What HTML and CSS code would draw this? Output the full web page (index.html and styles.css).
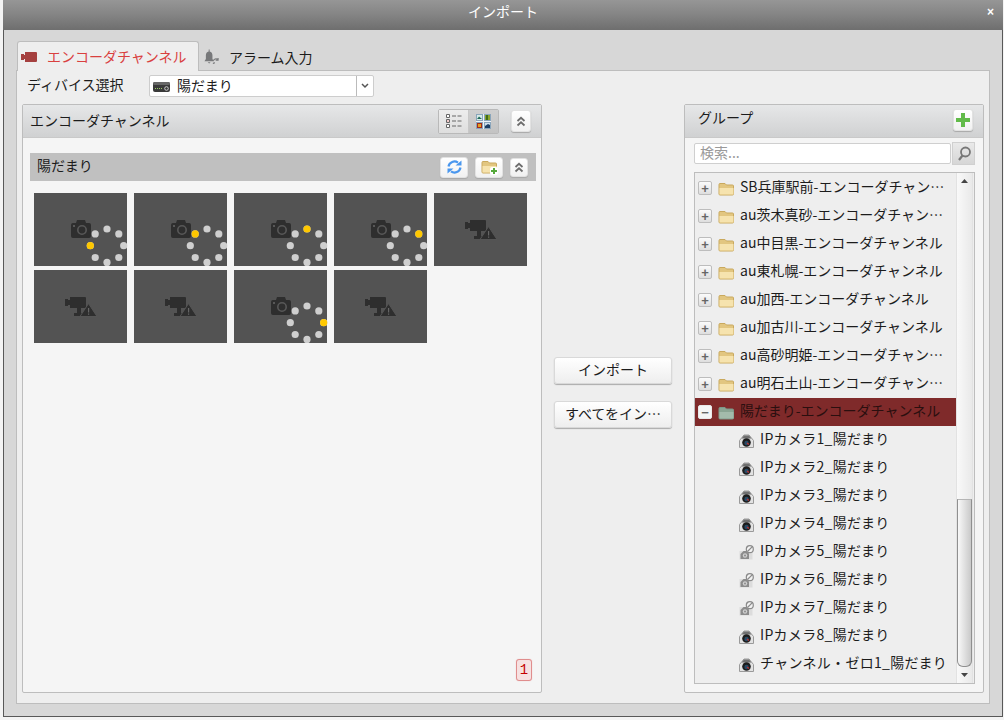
FILE: index.html
```html
<!DOCTYPE html>
<html lang="ja">
<head>
  <meta charset="UTF-8" />
  <title>インポート</title>
  <link rel="stylesheet" href="styles.css">
</head>
<body>

  <!-- shared icons -->
  <svg class="defs">
    <defs>
      <g id="cam">
        <path d="M5 3l1-3h8l1 3h3a2 2 0 0 1 2 2v11a2 2 0 0 1-2 2H2a2 2 0 0 1-2-2V5a2 2 0 0 1 2-2z" fill="#2e2e2e"/>
        <circle cx="11" cy="10" r="4.2" fill="none" stroke="#585858" stroke-width="1.6"/>
        <rect x="2" y="5" width="2" height="2" fill="#585858"/>
      </g>
      <g id="warncam">
        <path d="M0 2h3v1h2V0h15a1 1 0 0 1 1 1v10H16v5h5v3H9v-3h3v-5H5V8H3v1H0z" fill="#2e2e2e"/>
        <path d="M23.500 6.500L32 19.500H15z" fill="#2e2e2e" stroke="#555" stroke-width="1"/>
        <path d="M23 11h1.200v4.500H23zM23 16.500h1.200v1.300H23z" fill="#666"/>
      </g>
      <g id="dots" fill="#cfcfcf">
        <circle cx="73" cy="36" r="3.600"/>
        <circle cx="84.800" cy="40.900" r="3.600"/>
        <circle cx="89.700" cy="52.700" r="3.600"/>
        <circle cx="84.800" cy="64.500" r="3.600"/>
        <circle cx="73" cy="69.400" r="3.600"/>
        <circle cx="61.200" cy="64.500" r="3.600"/>
        <circle cx="56.300" cy="52.700" r="3.600"/>
        <circle cx="61.200" cy="40.900" r="3.600"/>
      </g>
      <g id="folder">
        <path d="M1 3.500a1 1 0 0 1 1-1h5l1.500 1.500h6a1 1 0 0 1 1 1v8a1 1 0 0 1-1 1H2a1 1 0 0 1-1-1z" fill="#e2c680" stroke="#c9a95e"/>
        <path d="M1.500 7h14v6.500h-14z" fill="#f6e3ae"/>
      </g>
      <g id="folder-sel">
        <path d="M1 3.500a1 1 0 0 1 1-1h5l1.500 1.500h6a1 1 0 0 1 1 1v8a1 1 0 0 1-1 1H2a1 1 0 0 1-1-1z" fill="#8aa593" stroke="#7d9788"/>
        <path d="M1.500 7h14v6.500h-14z" fill="#a3bbab"/>
      </g>
      <g id="ipcam">
        <path d="M.5 14.500V7.500L5 2h5l4.500 5.500v7z" fill="#e2e2e2" stroke="#9a9a9a"/>
        <path d="M5 2.500h5l2.500 3h-10z" fill="#6f6f6f"/>
        <circle cx="7.500" cy="9.500" r="4.300" fill="#1d1d1d"/>
        <circle cx="7.500" cy="10" r="2.200" fill="#274a66"/>
        <path d="M8 10l2 1.500" stroke="#c03030" stroke-width="1.200"/>
      </g>
      <g id="ipoff">
        <rect x=".5" y="6" width="13" height="8.500" fill="#dcdcdc"/>
        <path d="M1.500 14V9l3-3h3.500l2 2.500V14z" fill="#8c8c8c"/>
        <circle cx="6" cy="10.500" r="2.200" fill="#d0d0d0"/>
        <circle cx="6" cy="10.500" r="1" fill="#8c8c8c"/>
        <circle cx="10.800" cy="4.200" r="3.500" fill="#f2f2f2" stroke="#8a8a8a" stroke-width="1.200"/>
        <path d="M8.500 6.500l4.600-4.600" stroke="#8a8a8a" stroke-width="1.200"/>
      </g>
      <path id="chev" d="M2.500 6L6 2.800 9.500 6M2.500 10.500L6 7.300l3.500 3.200" fill="none" stroke="#6d6d6d" stroke-width="1.800"/>
    </defs>
  </svg>

  <div class="dialog">
    <div class="titlebar">
      <span class="title">インポート</span>
      <span class="close">×</span>
    </div>

    <div class="dialog-body">
      <div class="tabs">
        <div class="tab tab-active">
          <svg class="tab-icon" width="16" height="10" viewBox="0 0 16 10"><path d="M0 2h3v1h1V0h11a1 1 0 0 1 1 1v8a1 1 0 0 1-1 1H4V7H3v1H0z" fill="#a5403f"/></svg>
          <span class="tab-text">エンコーダチャンネル</span>
        </div>
        <div class="tab">
          <svg class="tab-icon" width="15" height="16" viewBox="0 0 16 16"><path d="M5 0h1v2c2 .5 3 2 3 4v4l1.500 2.500H.5L2 10V6c0-2 1-3.500 3-4z" fill="#77787a"/><path d="M4 13.500h3l-1.500 1.500z" fill="#77787a"/><path d="M10 12a3 3 0 0 1 4.500-1.500M15 9v2.500h-2.500M9.500 15l2-1" fill="none" stroke="#77787a" stroke-width="1.200"/></svg>
          <span class="tab-text">アラーム入力</span>
        </div>
      </div>

      <div class="tab-panel">
        <div class="device-row">
          <span class="device-label">ディバイス選択</span>
          <div class="select">
            <svg class="select-icon" width="17" height="11" viewBox="0 0 17 11"><rect y="1" width="17" height="10" rx="2" fill="#3a3a3a"/><rect y="1" width="17" height="3" rx="1.500" fill="#666"/><path d="M2 7h1v1H2zM4 7h1v1H4zM6 7h1v1H6zM8 7h1v1H8z" fill="#9c6"/><circle cx="13.500" cy="7.500" r="1.800" fill="none" stroke="#ccc"/></svg>
            <span class="select-text">陽だまり</span>
            <span class="select-arrow">
              <svg width="8" height="6" viewBox="0 0 8 6"><path d="M1 1l3 3 3-3" fill="none" stroke="#555" stroke-width="1.500"/></svg>
            </span>
          </div>
        </div>

        <div class="main">
          <!-- left panel -->
          <section class="panel panel-left">
            <div class="panel-head">
              <span class="panel-title">エンコーダチャンネル</span>
              <div class="toggle">
                <span class="toggle-item">
                  <svg width="16" height="14" viewBox="0 0 16 14"><path d="M.5.500h3v3h-3zM.5 5.500h3v3h-3zM.5 10.500h3v3h-3z" fill="#fff" stroke="#666"/><rect x="1.500" y="6.500" width="1" height="1" fill="#c33"/><path d="M6 2h4M11.500 2h4M6 7h4M11.500 7h4M6 12h4M11.500 12h4" stroke="#666"/></svg>
                </span>
                <span class="toggle-item toggle-on">
                  <svg width="15" height="15" viewBox="0 0 15 15"><path d="M0 0h15v15H0z" fill="#eef3f8"/><rect x=".5" y=".5" width="6" height="6" fill="#d8ebe6" stroke="#8aa5bb"/><path d="M1 5l2-2.500L6 5z" fill="#1f6a5a"/><rect x="8.500" y=".5" width="6" height="6" fill="#8aa52a" stroke="#8aa5bb"/><path d="M10 1h2v5h-2z" fill="#3f6a1a"/><rect x=".5" y="8.500" width="6" height="6" fill="#a52a1a" stroke="#8aa5bb"/><path d="M2 10h3v3H2z" fill="#e0a020"/><rect x="8.500" y="8.500" width="6" height="6" fill="#cfe0ee" stroke="#8aa5bb"/><path d="M9 14v-2l3-2 2 1v3z" fill="#1d3f66"/></svg>
                </span>
              </div>
              <button class="btn-icon btn-collapse"><svg width="12" height="13" viewBox="0 0 12 13"><use href="#chev"/></svg></button>
            </div>

            <div class="panel-left-body">
              <div class="subhead">
                <span class="subhead-title">陽だまり</span>
                <button class="btn-icon btn-wide">
                  <svg width="17" height="16" viewBox="0 0 17 16"><path d="M2.500 7.500A6 6 0 0 1 12 3.700" fill="none" stroke="#4a97ee" stroke-width="2.200"/><path d="M14.500 8.500A6 6 0 0 1 5 12.300" fill="none" stroke="#4a97ee" stroke-width="2.200"/><path d="M9.500 6.500h6v-5zM7.500 9.500h-6v5z" fill="#4a97ee"/></svg>
                </button>
                <button class="btn-icon btn-wide">
                  <svg width="17" height="16" viewBox="0 0 17 16"><use href="#folder"/><rect x="9" y="8" width="8" height="8" rx="2" fill="#fff"/><path d="M12 9h2v2h2v2h-2v2h-2v-2h-2v-2h2z" fill="#56a93c"/></svg>
                </button>
                <button class="btn-icon btn-collapse-small"><svg width="12" height="13" viewBox="0 0 12 13"><use href="#chev"/></svg></button>
              </div>

              <div class="thumbs">
                <svg class="thumb" viewBox="0 0 93 73"><use href="#cam" x="37" y="27"/><use href="#dots"/><circle cx="56.300" cy="52.700" r="3.600" fill="#ffc800"/></svg>
                <svg class="thumb" viewBox="0 0 93 73"><use href="#cam" x="37" y="27"/><use href="#dots"/><circle cx="61.200" cy="40.900" r="3.600" fill="#ffc800"/></svg>
                <svg class="thumb" viewBox="0 0 93 73"><use href="#cam" x="37" y="27"/><use href="#dots"/><circle cx="73" cy="36" r="3.600" fill="#ffc800"/></svg>
                <svg class="thumb" viewBox="0 0 93 73"><use href="#cam" x="37" y="27"/><use href="#dots"/><circle cx="84.800" cy="40.900" r="3.600" fill="#ffc800"/></svg>
                <svg class="thumb" viewBox="0 0 93 73"><use href="#warncam" x="31" y="27"/></svg>
                <svg class="thumb" viewBox="0 0 93 73"><use href="#warncam" x="31" y="27"/></svg>
                <svg class="thumb" viewBox="0 0 93 73"><use href="#warncam" x="31" y="27"/></svg>
                <svg class="thumb" viewBox="0 0 93 73"><use href="#cam" x="37" y="27"/><use href="#dots"/><circle cx="89.700" cy="52.700" r="3.600" fill="#ffc800"/></svg>
                <svg class="thumb" viewBox="0 0 93 73"><use href="#warncam" x="31" y="27"/></svg>
              </div>

              <span class="page-badge">1</span>
            </div>
          </section>

          <!-- import buttons -->
          <div class="actions">
            <button class="btn">インポート</button>
            <button class="btn">すべてをイン…</button>
          </div>

          <!-- right panel -->
          <section class="panel panel-right">
            <div class="panel-head">
              <span class="panel-title group-title">グループ</span>
              <button class="btn-icon btn-add">
                <svg width="14" height="14" viewBox="0 0 14 14"><path d="M5 0h4v5h5v4H9v5H5V9H0V5h5z" fill="#62bb4a"/></svg>
              </button>
            </div>

            <div class="panel-right-body">
              <div class="search-row">
                <input class="search-input" placeholder="検索..." />
                <span class="search-btn">
                  <svg width="16" height="16" viewBox="0 0 16 16"><circle cx="9.500" cy="6" r="4.500" fill="none" stroke="#777" stroke-width="1.800"/><path d="M6.500 9.500L3 14" stroke="#777" stroke-width="2.200"/></svg>
                </span>
              </div>

              <div class="tree">
                <div class="tree-rows">
                  <div class="row"><span class="exp">+</span><svg class="folder" viewBox="0 0 17 15"><use href="#folder"/></svg><span class="row-text">SB兵庫駅前-エンコーダチャン…</span></div>
                  <div class="row"><span class="exp">+</span><svg class="folder" viewBox="0 0 17 15"><use href="#folder"/></svg><span class="row-text">au茨木真砂-エンコーダチャン…</span></div>
                  <div class="row"><span class="exp">+</span><svg class="folder" viewBox="0 0 17 15"><use href="#folder"/></svg><span class="row-text">au中目黒-エンコーダチャンネル</span></div>
                  <div class="row"><span class="exp">+</span><svg class="folder" viewBox="0 0 17 15"><use href="#folder"/></svg><span class="row-text">au東札幌-エンコーダチャンネル</span></div>
                  <div class="row"><span class="exp">+</span><svg class="folder" viewBox="0 0 17 15"><use href="#folder"/></svg><span class="row-text">au加西-エンコーダチャンネル</span></div>
                  <div class="row"><span class="exp">+</span><svg class="folder" viewBox="0 0 17 15"><use href="#folder"/></svg><span class="row-text">au加古川-エンコーダチャンネル</span></div>
                  <div class="row"><span class="exp">+</span><svg class="folder" viewBox="0 0 17 15"><use href="#folder"/></svg><span class="row-text">au高砂明姫-エンコーダチャン…</span></div>
                  <div class="row"><span class="exp">+</span><svg class="folder" viewBox="0 0 17 15"><use href="#folder"/></svg><span class="row-text">au明石土山-エンコーダチャン…</span></div>
                  <div class="row row-selected"><span class="exp exp-open">−</span><svg class="folder" viewBox="0 0 17 15"><use href="#folder-sel"/></svg><span class="row-text">陽だまり-エンコーダチャンネル</span></div>
                  <div class="row row-child"><svg class="cam-icon" viewBox="0 0 15 15"><use href="#ipcam"/></svg><span class="row-text">IPカメラ1_陽だまり</span></div>
                  <div class="row row-child"><svg class="cam-icon" viewBox="0 0 15 15"><use href="#ipcam"/></svg><span class="row-text">IPカメラ2_陽だまり</span></div>
                  <div class="row row-child"><svg class="cam-icon" viewBox="0 0 15 15"><use href="#ipcam"/></svg><span class="row-text">IPカメラ3_陽だまり</span></div>
                  <div class="row row-child"><svg class="cam-icon" viewBox="0 0 15 15"><use href="#ipcam"/></svg><span class="row-text">IPカメラ4_陽だまり</span></div>
                  <div class="row row-child"><svg class="cam-icon" viewBox="0 0 15 15"><use href="#ipoff"/></svg><span class="row-text">IPカメラ5_陽だまり</span></div>
                  <div class="row row-child"><svg class="cam-icon" viewBox="0 0 15 15"><use href="#ipoff"/></svg><span class="row-text">IPカメラ6_陽だまり</span></div>
                  <div class="row row-child"><svg class="cam-icon" viewBox="0 0 15 15"><use href="#ipoff"/></svg><span class="row-text">IPカメラ7_陽だまり</span></div>
                  <div class="row row-child"><svg class="cam-icon" viewBox="0 0 15 15"><use href="#ipcam"/></svg><span class="row-text">IPカメラ8_陽だまり</span></div>
                  <div class="row row-child"><svg class="cam-icon" viewBox="0 0 15 15"><use href="#ipcam"/></svg><span class="row-text">チャンネル・ゼロ1_陽だまり</span></div>
                </div>

                <div class="scrollbar">
                  <span class="sb-btn"><svg width="7" height="4" viewBox="0 0 7 4"><path d="M3.500 0L7 4H0z" fill="#444"/></svg></span>
                  <div class="sb-track"><div class="sb-thumb"></div></div>
                  <span class="sb-btn"><svg width="7" height="4" viewBox="0 0 7 4"><path d="M0 0h7L3.500 4z" fill="#444"/></svg></span>
                </div>
              </div>
            </div>
          </section>
        </div>
      </div>
    </div>
  </div>

</body>
</html>
```

FILE: styles.css
```css
* {
  box-sizing: border-box;
}

html, body {
  margin: 0;
  height: 720px;
  overflow: hidden;
}

body {
  background: #f3f3f3;
  font-family: "Noto Sans CJK JP", "Liberation Sans", sans-serif;
  font-size: 14px;
  color: #1c1c1c;
}

.defs {
  display: none;
}

.dialog {
  display: flex;
  flex-direction: column;
  width: 1000px;
  height: 717px;
  margin-left: 3px;
  border: 1px solid #585858;
  border-top: none;
  background: #d7d7d7;
}

.titlebar {
  display: flex;
  align-items: center;
  justify-content: center;
  position: relative;
  flex: none;
  height: 30px;
  margin: 0 -1px;
  background: linear-gradient(#969696, #848484 50%, #6e6e6e);
  color: #fff;
}

.title {
  margin-top: -8px;
}

/* sits over the bar, title stays centred */
.close {
  position: absolute;
  right: 9px;
  top: 5px;
  font-family: "Liberation Sans", sans-serif;
  font-size: 12px;
  font-weight: bold;
}

.dialog-body {
  display: flex;
  flex-direction: column;
  flex: 1;
  min-height: 0;
  padding: 11px 12px 12px;
}

.tabs {
  display: flex;
  flex: none;
  height: 30px;
  padding-left: 1px;
  margin-bottom: -1px;
}

.tab {
  display: flex;
  align-items: center;
  padding: 4px 0 0 5px;
  color: #1c1c1c;
}

.tab-icon {
  margin-top: -2px;
  margin-right: 10px;
}

.tab-text {
  margin-top: -3px;
}

.tab-active {
  position: relative;
  width: 182px;
  padding-left: 3px;
  padding-top: 3px;
  border: 1px solid #bdbdbd;
  border-bottom: none;
  border-radius: 3px 3px 0 0;
  background: #eeeeee;
  color: #d9403f;
}

.tab-active .tab-text {
  margin-top: -4px;
}

.tab-panel {
  display: flex;
  flex-direction: column;
  flex: 1;
  min-height: 0;
  padding: 4px 5px 10px;
  border: 1px solid #bdbdbd;
  background: #eeeeee;
}

.device-row {
  display: flex;
  align-items: center;
  flex: none;
  height: 22px;
  margin-bottom: 7px;
  padding-left: 5px;
}

.device-label {
  width: 122px;
  margin-top: -5px;
}

.select {
  display: flex;
  align-items: center;
  width: 225px;
  height: 22px;
  border: 1px solid #cdcdcd;
  border-radius: 2px;
  background: #fff;
}

.select-icon {
  margin-left: 3px;
}

.select-text {
  flex: 1;
  margin-left: 7px;
  margin-top: -3px;
}

.select-arrow {
  display: flex;
  align-items: center;
  justify-content: center;
  width: 17px;
  height: 100%;
  border-left: 1px solid #bbb;
}

.main {
  display: flex;
  flex: 1;
  min-height: 0;
}

.panel {
  display: flex;
  flex-direction: column;
  border: 1px solid #bdbdbd;
  border-radius: 2px;
  background: #f5f5f5;
}

.panel-left {
  width: 520px;
}

.panel-right {
  width: 300px;
}

.panel-head {
  display: flex;
  align-items: center;
  flex: none;
  height: 33px;
  padding-left: 7px;
  border-bottom: 1px solid #c9c9c9;
  background: linear-gradient(#e6e7e8, #d0d1d2);
}

.panel-title {
  flex: 1;
  margin-top: -3px;
}

.group-title {
  padding-left: 6px;
  margin-top: -8px;
}

.toggle {
  display: flex;
  width: 61px;
  height: 25px;
  margin-right: 12px;
  border: 1px solid #b9b9b9;
  border-radius: 2px;
}

.toggle-item {
  display: flex;
  align-items: center;
  justify-content: center;
  flex: 1;
  background: linear-gradient(#ededed, #dedede);
}

.toggle-on {
  border-left: 1px solid #c8c8c8;
  background: linear-gradient(#cfcfcf, #c3c3c3);
}

.btn-icon {
  display: flex;
  align-items: center;
  justify-content: center;
  padding: 0;
  border: 1px solid #e2e2e2;
  border-radius: 3px;
  background: linear-gradient(#ffffff, #f1f1f1);
  box-shadow: 0 1px 1px #a8a8a8;
}

.btn-collapse {
  width: 20px;
  height: 22px;
  margin-right: 10px;
}

.panel-left-body {
  display: flex;
  flex-direction: column;
  flex: 1;
  min-height: 0;
}

.subhead {
  display: flex;
  align-items: center;
  flex: none;
  height: 28px;
  margin: 15px 5px 12px 7px;
  padding-left: 7px;
  background: #c0c0c0;
}

.subhead-title {
  flex: 1;
  margin-top: -5px;
}

.btn-wide {
  width: 28px;
  height: 21px;
  margin-right: 7px;
}

.btn-collapse-small {
  width: 18px;
  height: 19px;
  margin-right: 8px;
}

.thumbs {
  display: grid;
  grid-template-columns: repeat(5, 93px);
  grid-auto-rows: 73px;
  column-gap: 7px;
  row-gap: 4px;
  padding-left: 11px;
}

.thumb {
  display: block;
  width: 93px;
  height: 73px;
  overflow: visible;
  background: #535353;
}

.page-badge {
  align-self: flex-end;
  width: 16px;
  height: 22px;
  margin: auto 9px 11px 0;
  border: 1px solid #e08d8d;
  border-radius: 3px;
  background: #f6e1e1;
  box-shadow: 0 0 1px #e9b0b0;
  color: #c40000;
  font-family: "Liberation Mono", monospace;
  font-size: 14px;
  line-height: 20px;
  text-align: center;
}

.actions {
  display: flex;
  flex-direction: column;
  gap: 17px;
  width: 118px;
  margin: 0 12px;
  padding-top: 253px;
}

.btn {
  width: 118px;
  height: 27px;
  padding: 0 8px 4px;
  border: 1px solid #d9d9d9;
  border-radius: 3px;
  background: linear-gradient(#ffffff, #eeeeee);
  box-shadow: 0 1px 1px #aaaaaa;
  color: #1c1c1c;
  font: inherit;
  line-height: 20px;
  white-space: nowrap;
}

.btn-add {
  width: 20px;
  height: 22px;
  margin-right: 10px;
  margin-top: -2px;
}

.panel-right-body {
  display: flex;
  flex-direction: column;
  flex: 1;
  min-height: 0;
  padding: 4px 8px 8px 9px;
}

.search-row {
  display: flex;
  align-items: center;
  flex: none;
  height: 23px;
  margin-bottom: 7px;
}

.search-input {
  width: 257px;
  height: 21px;
  margin-right: 1px;
  padding: 0 5px 4px;
  border: 1px solid #cfcfcf;
  border-radius: 2px;
  background: #fff;
  font: inherit;
}

.search-input::placeholder {
  color: #9a9a9a;
}

.search-btn {
  display: flex;
  align-items: center;
  justify-content: center;
  width: 23px;
  height: 23px;
  border: 1px solid #d0d0d0;
  background: linear-gradient(#e9e9e9, #d6d6d6);
}

.tree {
  display: flex;
  flex: 1;
  min-height: 0;
  border: 1px solid #bdbdbd;
  background: #eeeeee;
}

.tree-rows {
  width: 261px;
  padding-top: 1px;
  overflow: hidden;
}

.row {
  display: flex;
  align-items: center;
  height: 28px;
  padding-right: 10px;
}

.row-selected {
  background: #7f2a2a;
  color: #2a0f0f;
}

.row-child {
  padding-left: 44px;
}

.exp {
  display: flex;
  align-items: center;
  justify-content: center;
  flex: none;
  width: 14px;
  height: 14px;
  margin-left: 3px;
  border: 1px solid #bdbdbd;
  border-radius: 2px;
  background: linear-gradient(#fbfbfb, #dedede);
  color: #666;
  font-family: "Liberation Sans", sans-serif;
  font-size: 13px;
  font-weight: bold;
  line-height: 1;
}

.exp-open {
  border-color: #e8e8e8;
  background: #f5f5f5;
}

.folder {
  flex: none;
  width: 17px;
  height: 15px;
  margin-left: 6px;
}

.cam-icon {
  flex: none;
  width: 15px;
  height: 15px;
}

.row-text {
  margin-left: 5px;
  margin-top: -5px;
  white-space: nowrap;
}

.row-child .row-text {
  margin-left: 6px;
  letter-spacing: .3px;
}

.scrollbar {
  display: flex;
  flex-direction: column;
  width: 17px;
  background: linear-gradient(90deg, #f9f9f9, #e9e9e9);
  border-left: 1px solid #e2e2e2;
  border-right: 1px solid #e2e2e2;
}

.sb-btn {
  display: flex;
  align-items: center;
  justify-content: center;
  flex: none;
  height: 16px;
}

.sb-track {
  display: flex;
  flex-direction: column;
  justify-content: flex-end;
  flex: 1;
}

.sb-thumb {
  height: 168px;
  border: 1px solid #8f8f8f;
  border-top: 1px solid #b5b5b5;
  border-radius: 0 0 6px 6px;
  background: linear-gradient(90deg, #f8f8f8, #c9c9c9);
}
```
